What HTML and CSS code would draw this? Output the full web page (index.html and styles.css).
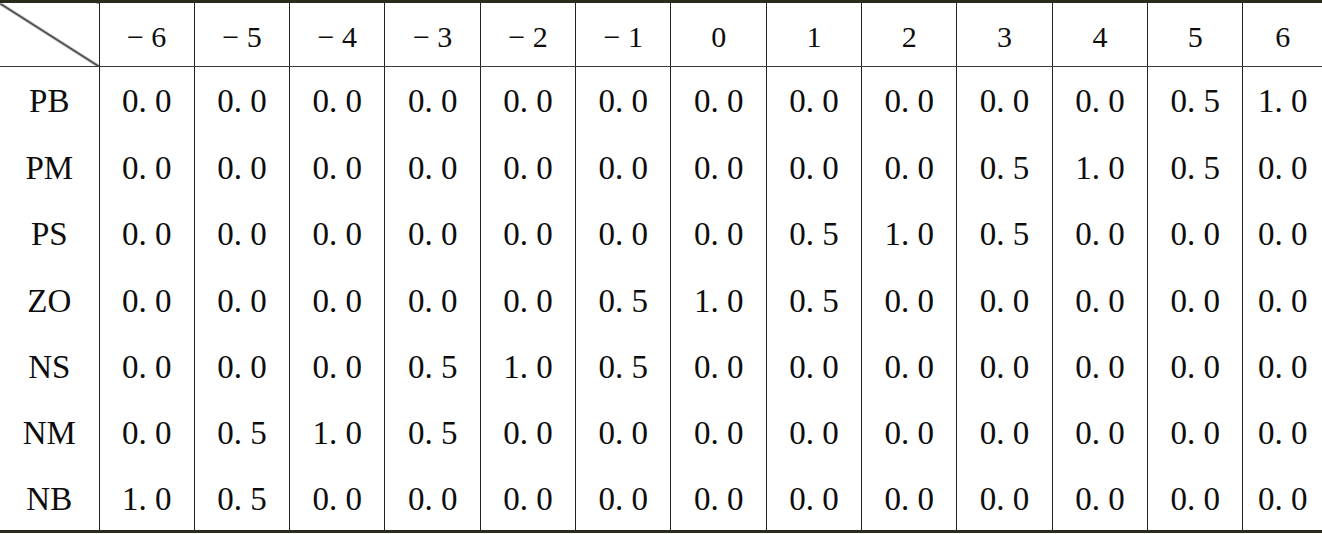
FILE: index.html
```html
<!DOCTYPE html>
<html>
<head>
<meta charset="utf-8">
<link rel="stylesheet" href="styles.css">
</head>
<body>
<table class="grid">
  <colgroup>
    <col class="c-head">
    <col class="c-num"><col class="c-num"><col class="c-num"><col class="c-num">
    <col class="c-num"><col class="c-num"><col class="c-num"><col class="c-num">
    <col class="c-num"><col class="c-num"><col class="c-num"><col class="c-num">
    <col class="c-last">
  </colgroup>
  <thead>
    <tr class="head-row">
      <th class="corner"></th>
      <th>− 6</th><th>− 5</th><th>− 4</th><th>− 3</th><th>− 2</th><th>− 1</th>
      <th>0</th><th>1</th><th>2</th><th>3</th><th>4</th><th>5</th><th>6</th>
    </tr>
  </thead>
  <tbody>
    <tr><th>PB</th><td>0. 0</td><td>0. 0</td><td>0. 0</td><td>0. 0</td><td>0. 0</td><td>0. 0</td><td>0. 0</td><td>0. 0</td><td>0. 0</td><td>0. 0</td><td>0. 0</td><td>0. 5</td><td>1. 0</td></tr>
    <tr><th>PM</th><td>0. 0</td><td>0. 0</td><td>0. 0</td><td>0. 0</td><td>0. 0</td><td>0. 0</td><td>0. 0</td><td>0. 0</td><td>0. 0</td><td>0. 5</td><td>1. 0</td><td>0. 5</td><td>0. 0</td></tr>
    <tr><th>PS</th><td>0. 0</td><td>0. 0</td><td>0. 0</td><td>0. 0</td><td>0. 0</td><td>0. 0</td><td>0. 0</td><td>0. 5</td><td>1. 0</td><td>0. 5</td><td>0. 0</td><td>0. 0</td><td>0. 0</td></tr>
    <tr><th>ZO</th><td>0. 0</td><td>0. 0</td><td>0. 0</td><td>0. 0</td><td>0. 0</td><td>0. 5</td><td>1. 0</td><td>0. 5</td><td>0. 0</td><td>0. 0</td><td>0. 0</td><td>0. 0</td><td>0. 0</td></tr>
    <tr><th>NS</th><td>0. 0</td><td>0. 0</td><td>0. 0</td><td>0. 5</td><td>1. 0</td><td>0. 5</td><td>0. 0</td><td>0. 0</td><td>0. 0</td><td>0. 0</td><td>0. 0</td><td>0. 0</td><td>0. 0</td></tr>
    <tr><th>NM</th><td>0. 0</td><td>0. 5</td><td>1. 0</td><td>0. 5</td><td>0. 0</td><td>0. 0</td><td>0. 0</td><td>0. 0</td><td>0. 0</td><td>0. 0</td><td>0. 0</td><td>0. 0</td><td>0. 0</td></tr>
    <tr><th>NB</th><td>1. 0</td><td>0. 5</td><td>0. 0</td><td>0. 0</td><td>0. 0</td><td>0. 0</td><td>0. 0</td><td>0. 0</td><td>0. 0</td><td>0. 0</td><td>0. 0</td><td>0. 0</td><td>0. 0</td></tr>
  </tbody>
</table>
</body>
</html>
```
FILE: styles.css
```css
html, body {
  margin: 0;
  padding: 0;
  background: #ffffff;
}
body {
  width: 1322px;
  height: 534px;
  overflow: hidden;
}
.grid {
  width: 1322px;
  table-layout: fixed;
  border-collapse: collapse;
  font-family: "Liberation Serif", "Times New Roman", serif;
  color: #0d0d0d;
  border-top: 3px solid #2b2a1f;
  border-bottom: 3px solid #2b2a1f;
}
.c-head { width: 99px; }
.c-num { width: 95.33px; }
.c-last { width: 79px; }
.grid th,
.grid td {
  box-sizing: border-box;
  padding: 4px 0 0;
  text-align: center;
  vertical-align: middle;
  font-weight: normal;
  border-left: 1px solid #24241f;
  height: 66.45px;
  font-size: 33px;
  line-height: 1;
}
.grid th:first-child {
  border-left: none;
}
.head-row th {
  height: 65px;
  font-size: 30px;
  padding-top: 5px;
  border-bottom: 1px solid #3a3a34;
}
.corner {
  background: linear-gradient(to top right, transparent calc(50% - 1.7px), #151515 50%, transparent calc(50% + 1.7px));
}
```
